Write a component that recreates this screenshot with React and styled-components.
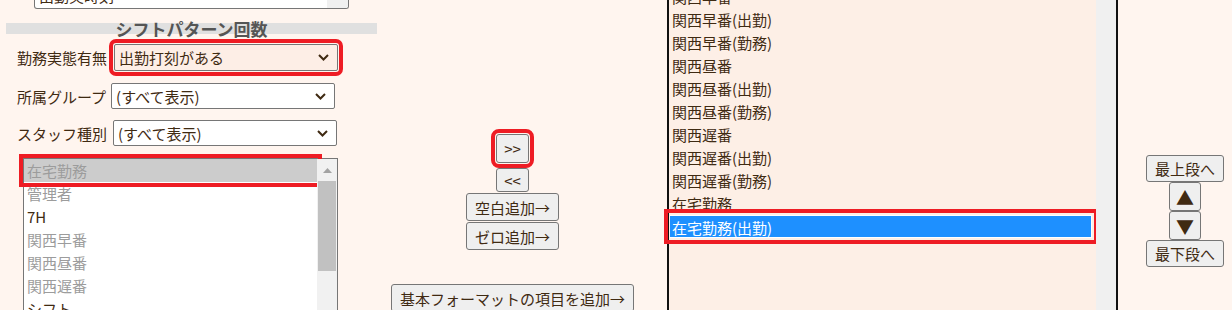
import React from 'react';
import styled, { createGlobalStyle } from 'styled-components';

const GlobalStyle = createGlobalStyle`
    body {
        margin: 0;
        background: #fff5ef;
    }
`;

const Page = styled.div`
    display: flex;
    height: 310px;
    overflow: hidden;
    background: #fff5ef;
    color: #3f2a12;
    font-family: "Noto Sans CJK JP", "Noto Sans", sans-serif;
    font-size: 15px;
`;

const LeftCol = styled.div`
    width: 385px;
    flex: none;
    display: flex;
    flex-direction: column;
    & > * {
        flex: none;
    }
`;

const CutBox = styled.div`
    margin-left: 34px;
    width: 315px;
    height: 9px;
    box-sizing: border-box;
    border: 1px solid #767676;
    border-top: none;
    border-radius: 0 0 3px 3px;
    background: #fff;
    display: flex;
    overflow: hidden;
`;

const CutText = styled.div`
    flex: 1;
    padding-left: 4px;
    margin-top: -14px;
    line-height: 20px;
`;

const CutTrack = styled.div`
    width: 21px;
    background: #f0f0f0;
`;

const Heading = styled.div`
    margin: 14px 8px 0 6px;
    height: 11px;
    background: #e0e0e0;
    text-align: center;
    font-size: 17px;
    line-height: 11px;
    font-weight: bold;
    color: #555;
`;

const Row = styled.div`
    display: flex;
    align-items: center;
    gap: ${p => p.$gap}px;
    padding-left: 17px;
    margin-top: ${p => p.$top}px;
`;

const Label = styled.span`
    white-space: nowrap;
`;

const Select = styled.div`
    width: 224px;
    height: ${p => p.$h}px;
    box-sizing: border-box;
    border: 1px solid #767676;
    border-radius: 2px;
    background: ${p => (p.$tint ? '#fdeee6' : '#fff')};
    display: flex;
    align-items: center;
    justify-content: space-between;
    padding: 0 8px 0 4px;
    outline: ${p => (p.$mark ? '4px solid #ee1c24' : 'none')};
    outline-offset: 1px;
`;

const ListBox = styled.div`
    margin: 12px 0 0 23px;
    width: 315px;
    height: 200px;
    box-sizing: border-box;
    border: 1px solid #767676;
    background: #fff;
    display: flex;
`;

const Items = styled.div`
    flex: 1;
    display: flex;
    flex-direction: column;
`;

const Item = styled.div`
    height: 23px;
    line-height: 23px;
    flex: none;
    padding-left: 3px;
    white-space: nowrap;
    color: ${p => (p.$off ? '#9c9c9c' : 'inherit')};
    background: ${p => (p.$sel ? '#cccccc' : 'transparent')};
    outline: ${p => (p.$mark ? '4px solid #ee1c24' : 'none')};
    outline-offset: 1px;
`;

const Track = styled.div`
    width: 20px;
    background: #f1f1f1;
    display: flex;
    flex-direction: column;
    align-items: center;
`;

const Thumb = styled.div`
    width: 18px;
    height: 90px;
    background: #c1c1c1;
`;

const MidCol = styled.div`
    width: 255px;
    flex: none;
    display: flex;
    flex-direction: column;
    align-items: center;
    padding-top: 134px;
`;

const Button = styled.button`
    font: inherit;
    color: inherit;
    background: #efefef;
    border: 1px solid #767676;
    border-radius: 3px;
    padding: 0 8px;
    height: ${p => p.$h}px;
    width: ${p => (p.$w ? `${p.$w}px` : 'auto')};
    margin-top: ${p => p.$top || 0}px;
    flex: none;
    line-height: 1;
    white-space: nowrap;
    outline: ${p => (p.$mark ? '4px solid #ee1c24' : 'none')};
    outline-offset: 1px;
`;

const SmallButton = styled(Button)`
    padding: 0;
`;

const ArrowButton = styled(Button)`
    padding: 0;
    font-size: 18px;
`;

const RightList = styled.div`
    margin: -30px 0 0 27px;
    width: 451px;
    height: 400px;
    flex: none;
    box-sizing: border-box;
    border: 2px solid #111;
    background: #fdefe6;
    display: flex;
`;

const RightItems = styled.div`
    flex: 1;
    padding: 13px 4px 0 1px;
    display: flex;
    flex-direction: column;
`;

const RightItem = styled.div`
    height: 23px;
    line-height: 23px;
    flex: none;
    box-sizing: border-box;
    padding-left: 2px;
    white-space: nowrap;
    color: ${p => (p.$sel ? '#fff' : 'inherit')};
    background: ${p => (p.$sel ? '#1e90ff' : 'transparent')};
    border: ${p => (p.$sel ? '1px solid #fff' : 'none')};
    border-left: none;
    outline: ${p => (p.$sel ? '4px solid #ee1c24' : 'none')};
    outline-offset: 2px;
`;

const RightTrack = styled.div`
    width: 20px;
    background: #f0f0f0;
`;

const SideCol = styled.div`
    flex: 1;
    display: flex;
    flex-direction: column;
    align-items: center;
    padding: 155px 0 0 20px;
`;

const Chevron = () => (
    <svg width="11" height="7" viewBox="0 0 11 7">
        <polyline points="1,1 5.5,5.5 10,1" fill="none" stroke="#3f2a12" strokeWidth="2" />
    </svg>
);

const UpArrow = () => (
    <svg width="9" height="5" viewBox="0 0 9 5" style={{ marginTop: 9, marginBottom: 8 }}>
        <polygon points="0,5 4.5,0 9,5" fill="#a3a3a3" />
    </svg>
);

const leftItems = [
    { t: '在宅勤務', off: true, sel: true },
    { t: '管理者', off: true },
    { t: '7H' },
    { t: '関西早番', off: true },
    { t: '関西昼番', off: true },
    { t: '関西遅番', off: true },
    { t: 'シフト' },
];

const rightItems = [
    '関西早番',
    '関西早番(出勤)',
    '関西早番(勤務)',
    '関西昼番',
    '関西昼番(出勤)',
    '関西昼番(勤務)',
    '関西遅番',
    '関西遅番(出勤)',
    '関西遅番(勤務)',
    '在宅勤務',
    '在宅勤務(出勤)',
];

const App = () => {
    return (
        <Page>
            <GlobalStyle />
            <LeftCol>
                <CutBox>
                    <CutText>出勤実時刻</CutText>
                    <CutTrack />
                </CutBox>
                <Heading>シフトパターン回数</Heading>
                <Row $top={10} $gap={7}>
                    <Label>勤務実態有無</Label>
                    <Select $h={27} $tint $mark>
                        出勤打刻がある
                        <Chevron />
                    </Select>
                </Row>
                <Row $top={12} $gap={5}>
                    <Label>所属グループ</Label>
                    <Select $h={26}>
                        (すべて表示)
                        <Chevron />
                    </Select>
                </Row>
                <Row $top={11} $gap={6}>
                    <Label>スタッフ種別</Label>
                    <Select $h={26}>
                        (すべて表示)
                        <Chevron />
                    </Select>
                </Row>
                <ListBox>
                    <Items>
                        {leftItems.map(it => (
                            <Item key={it.t} $off={it.off} $sel={it.sel} $mark={it.sel}>
                                {it.t}
                            </Item>
                        ))}
                    </Items>
                    <Track>
                        <UpArrow />
                        <Thumb />
                    </Track>
                </ListBox>
            </LeftCol>

            <MidCol>
                <SmallButton $h={29} $w={33} $mark>&gt;&gt;</SmallButton>
                <SmallButton $h={24} $w={33} $top={5}>&lt;&lt;</SmallButton>
                <Button $h={28} $top={1}>空白追加→</Button>
                <Button $h={28} $top={1}>ゼロ追加→</Button>
                <Button $h={28} $top={34}>基本フォーマットの項目を追加→</Button>
            </MidCol>

            <RightList>
                <RightItems>
                    {rightItems.map((t, i) => (
                        <RightItem key={t} $sel={i === rightItems.length - 1}>
                            {t}
                        </RightItem>
                    ))}
                </RightItems>
                <RightTrack />
            </RightList>

            <SideCol>
                <Button $h={27}>最上段へ</Button>
                <ArrowButton $h={29} $w={32}>▲</ArrowButton>
                <ArrowButton $h={29} $w={32}>▼</ArrowButton>
                <Button $h={27}>最下段へ</Button>
            </SideCol>
        </Page>
    );
};

export default App;
